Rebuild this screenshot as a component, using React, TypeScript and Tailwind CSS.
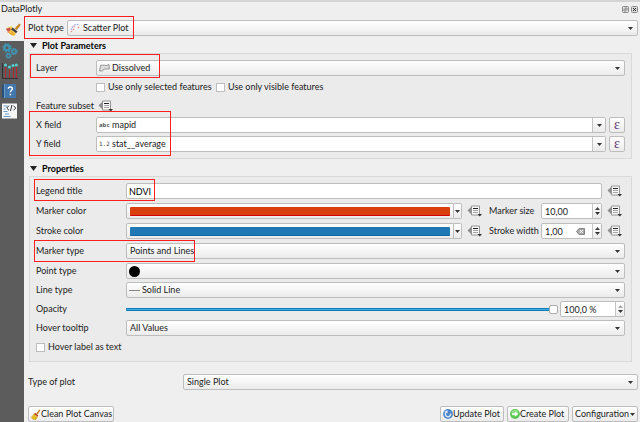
import React, { useState } from 'react';

interface ChildrenProps {
  children?: React.ReactNode;
}

/* ---------- Icons ---------- */

const DownArrow = () => (
  <svg viewBox="0 0 5 3" className="h-[3px] w-[5px] shrink-0" fill="#333">
    <path d="M0 0h5L2.5 3z" />
  </svg>
);

const UpArrow = ({ fill = '#444' }: { fill?: string }) => (
  <svg viewBox="0 0 5 3" className="h-[3px] w-[5px]" fill={fill}>
    <path d="M0 3h5L2.5 0z" />
  </svg>
);

const BrushIcon = () => (
  <svg viewBox="0 0 16 14" className="h-[14px] w-4">
    <path d="M1 5.500l5-2.500 2 2-1 3-4 1z" fill="#f6d84c" />
    <path d="M.8 6l4-1.500 1.500 3-3 1.500z" fill="#cf4f5b" />
    <path d="M2 9l4-2 1.500 2.500L5 11z" fill="#f29a55" />
    <path d="M7.500 4.500l5 4-1.500 1.800L6 6.500z" fill="#3d3d3d" />
    <path d="M6 6.500l5 4-2 2.500-3-1-2-3z" fill="#f2bd3a" />
    <path d="M6.500 9l2 2.500M5.500 10l1.500 2" stroke="#c98f1e" strokeWidth=".6" />
    <path d="M10 5.500L14.300.8l1 1.200-3.500 4.800z" fill="#d08a1c" stroke="#a8690e" strokeWidth=".5" />
  </svg>
);

const GearsIcon = () => (
  <svg viewBox="0 0 16 16" className="h-4 w-4" fill="none" stroke="#3f97b5">
    <circle cx="5" cy="4.800" r="2.500" strokeWidth="2" />
    <circle cx="5" cy="4.800" r="3.900" strokeWidth="1.600" strokeDasharray="1.700 1.363" />
    <circle cx="12.200" cy="8.500" r="1.900" strokeWidth="1.500" />
    <circle cx="12.200" cy="8.500" r="2.900" strokeWidth="1.300" strokeDasharray="1.300 .978" />
    <circle cx="6.500" cy="12.700" r="1.700" strokeWidth="1.400" />
    <circle cx="6.500" cy="12.700" r="2.600" strokeWidth="1.200" strokeDasharray="1.100 .942" />
  </svg>
);

const StemsIcon = () => (
  <svg viewBox="0 0 16 16" className="h-4 w-4">
    <path d="M.5 0v15.500H16" fill="none" stroke="#303030" />
    <path d="M3.500 4v11M7.500 6v9M11.500 4v11M14.500 3v12" stroke="#b5262e" strokeWidth="1" />
    <g fill="#4fd0cf">
      <circle cx="3.500" cy="2" r="1.500" />
      <circle cx="7.500" cy="4" r="1.500" />
      <circle cx="11" cy="2.500" r="1.500" />
      <circle cx="14.300" cy="2" r="1.500" />
    </g>
  </svg>
);

const HelpIcon = () => (
  <svg viewBox="0 0 14 14" className="h-[14px] w-[14px]">
    <path d="M0 1l2-1v14H0z" fill="#28507a" />
    <rect x="2" width="12" height="14" rx="1" fill="#4378ae" />
    <rect x="2" width="1" height="14" fill="#6d9ac7" />
    <path
      d="M6.300 4.800c0-2.500 4.100-2.500 4.100 0 0 1.500-2 1.600-2 3.400M8.400 9.800v1.400"
      fill="none"
      stroke="#fff"
      strokeWidth="1.400"
    />
  </svg>
);

const CodeIcon = () => (
  <svg viewBox="0 0 16 16" className="h-4 w-4">
    <path d="M1 .5h15v15H1z" fill="#f4f6f8" />
    <path d="M2.500 3h4M2.500 6h2M2.500 8.500h4M4 11h4M2.500 13.500h7" stroke="#6d9bc9" strokeWidth="1.200" />
    <path d="M8 2.700L5.700 5 8 7.300M12.500 2.700L14.800 5l-2.300 2.300M11 2L9.400 8" fill="none" stroke="#333" />
  </svg>
);

const ScatterIcon = () => (
  <svg viewBox="0 0 10 10" className="h-[10px] w-[10px]">
    <g fill="#e88a8a">
      <circle cx="1.500" cy="8.500" r=".8" />
      <circle cx="3.500" cy="6.500" r=".8" />
      <circle cx="4" cy="3.500" r=".8" />
      <circle cx="8.500" cy="4.500" r=".8" />
    </g>
    <g fill="#9a9fe0">
      <circle cx="1.500" cy="6" r=".8" />
      <circle cx="2.500" cy="4" r=".8" />
      <circle cx="5" cy="1.800" r=".8" />
      <circle cx="7.500" cy="1.500" r=".8" />
    </g>
  </svg>
);

const PolygonIcon = () => (
  <svg viewBox="0 0 11 8" className="h-2 w-[11px]">
    <path
      d="M1.500 1.200h4l1.500.5 3-1.200.4 4.500H7.500L5 5 3.500 7H.6z"
      fill="#dcdcdc"
      stroke="#909090"
      strokeWidth=".9"
      strokeLinejoin="round"
    />
  </svg>
);

const OverrideIcon = () => (
  <svg viewBox="0 0 15 12" className="h-3 w-[15px]">
    <path d="M4.500 1.500v8L.5 5.500z" fill="#8c8c8c" />
    <path d="M4.500 1h8v9h-8z" fill="#f8f8f8" stroke="#8a8a8a" strokeWidth=".9" />
    <path d="M6 3.500h5" stroke="#222" strokeWidth="1" />
    <path d="M6 5.500h5M6 7.500h5" stroke="#9a9a9a" strokeWidth=".9" />
    <path d="M10.500 9h4.500l-2.200 2.500z" fill="#333" />
  </svg>
);

const BroomIcon = () => (
  <svg viewBox="0 0 10 11" className="h-[11px] w-[10px] shrink-0">
    <path d="M8.500.5l1 .8-3 4.200-1.200-.9z" fill="#c9731c" />
    <path d="M4 3.800l3.300 2.600-.8 1.300L3 5z" fill="#b43a22" />
    <path d="M3 5l3.500 2.700-1.500 2.800C3 11 1 10 .3 8.500z" fill="#f2c62e" stroke="#b98a14" strokeWidth=".5" />
    <path d="M3.500 6.500L2 9M5 7.500L3.800 10" stroke="#b98a14" strokeWidth=".5" />
  </svg>
);

const RefreshIcon = () => (
  <svg viewBox="0 0 10 10" className="h-[10px] w-[10px] shrink-0">
    <circle cx="5" cy="5" r="4.900" fill="#4d86cb" />
    <path d="M3 3.200a2.700 2.700 0 1 0 4.600 1.300" fill="none" stroke="#e6effa" strokeWidth="1.200" />
    <path d="M1.500 2l3.300-.5-.5 3z" fill="#e6effa" />
  </svg>
);

const CreateIcon = () => (
  <svg viewBox="0 0 10 10" className="h-[10px] w-[10px] shrink-0">
    <circle cx="5" cy="5" r="4.900" fill="#58c653" />
    <circle cx="5" cy="3.800" r="3.400" fill="#8adf83" />
    <path d="M2 4.200h3V2.500L8.200 5 5 7.500V5.800H2z" fill="#fff" />
  </svg>
);

const ClearIcon = () => (
  <svg viewBox="0 0 9 7" className="h-[7px] w-[9px]">
    <path d="M3 .5h5.500v6H3L.5 3.500z" fill="#a8a8a8" stroke="#858585" />
    <path d="M3.800 2l3 3M6.800 2l-3 3" stroke="#fff" strokeWidth=".9" />
  </svg>
);

/* ---------- Controls ---------- */

// thin red frame used to point out the fields of the tutorial step
const Highlight = ({ className }: { className: string }) => (
  <span className={`pointer-events-none absolute z-10 border border-[#ff1e1e] ${className}`} />
);

interface ComboProps {
  id: string;
  value: string;
  icon?: React.ReactNode;
  editable?: boolean;
}

const Combo: React.FC<ComboProps> = ({ id, value, icon, editable }) => (
  <div className="relative min-w-0 flex-1">
    <select
      id={id}
      className={`block h-4 w-full appearance-none rounded-[2px] border border-[#bdbdbd] leading-[14px] ${
        icon ? 'pl-[15px]' : 'pl-[3px]'
      } ${editable ? 'bg-white' : 'bg-linear-to-b from-white to-[#ebebeb]'}`}
    >
      <option>{value}</option>
    </select>
    {icon && <span className="pointer-events-none absolute inset-y-0 left-[3px] flex items-center">{icon}</span>}
    <span
      className={`pointer-events-none absolute inset-y-px right-px flex w-[13px] items-center justify-center ${
        editable ? 'border-l border-[#c4c4c4] bg-linear-to-b from-white to-[#ebebeb]' : ''
      }`}
    >
      <DownArrow />
    </span>
  </div>
);

interface SpinProps {
  id: string;
  value: string;
  className: string;
  clearable?: boolean;
  atMax?: boolean;
}

const Spin: React.FC<SpinProps> = ({ id, value, className, clearable, atMax }) => (
  <div className={`flex h-4 items-center rounded-[2px] border border-[#bdbdbd] bg-white ${className}`}>
    <input
      id={id}
      aria-label={id}
      defaultValue={value}
      className="h-full w-full min-w-0 flex-1 pl-[3px] outline-none"
    />
    {clearable && (
      <button aria-label="Clear" className="mr-[7px]">
        <ClearIcon />
      </button>
    )}
    <div className="flex h-full w-[9px] flex-col items-center justify-evenly border-l border-[#c4c4c4] bg-linear-to-b from-white to-[#ebebeb]">
      <button aria-label="Increase">
        <UpArrow fill={atMax ? '#aaa' : '#444'} />
      </button>
      <button aria-label="Decrease">
        <DownArrow />
      </button>
    </div>
  </div>
);

const OverrideButton = () => (
  <button aria-label="Data defined override" className="flex w-4">
    <OverrideIcon />
  </button>
);

const ExpressionButton = () => (
  <button
    aria-label="Expression"
    className="ml-[3px] flex h-4 w-4 items-center justify-center rounded-[2px] border border-[#bdbdbd] bg-linear-to-b from-white to-[#ebebeb] font-['Liberation_Serif',serif] text-[14px] leading-none text-[#5f3673]"
  >
    ε
  </button>
);

const ColorButton = ({ id, swatch }: { id: string; swatch: string }) => (
  <div className="flex h-4 min-w-0 flex-1">
    <button
      id={id}
      className="flex flex-1 items-center rounded-l-[2px] border border-[#bdbdbd] bg-linear-to-b from-white to-[#ebebeb] px-[3px]"
    >
      <span className={`h-[9px] w-full rounded-[1px] border-b ${swatch}`} />
    </button>
    <button
      aria-label="Color menu"
      className="flex w-2 items-center justify-center rounded-r-[2px] border border-l-0 border-[#bdbdbd] bg-linear-to-b from-white to-[#ebebeb]"
    >
      <DownArrow />
    </button>
  </div>
);

interface CheckProps {
  label: string;
  className?: string;
}

const Check: React.FC<CheckProps> = ({ label, className = '' }) => (
  <label className={`flex h-4 items-center gap-[3px] whitespace-nowrap ${className}`}>
    <input
      type="checkbox"
      className="h-[9px] w-[9px] appearance-none border border-[#bdbdbd] bg-white checked:bg-[#3daee9]"
    />
    {label}
  </label>
);

interface RowProps extends ChildrenProps {
  label: string;
  htmlFor: string;
  wide?: boolean;
}

const Row: React.FC<RowProps> = ({ label, htmlFor, wide, children }) => (
  <div className="relative flex h-4 items-center">
    <label htmlFor={htmlFor} className={`shrink-0 ${wide ? 'w-[90px]' : 'w-[60px]'}`}>
      {label}
    </label>
    {children}
  </div>
);

const Group: React.FC<{ title: string } & ChildrenProps> = ({ title, children }) => (
  <section className="mr-[6px] ml-px">
    <h2 className="flex h-[17px] items-center gap-[5px] pt-[2px] pl-px font-bold text-black">
      <svg viewBox="0 0 7 5" className="h-[5px] w-[7px]" fill="#222">
        <path d="M0 0h7L3.500 5z" />
      </svg>
      {title}
    </h2>
    <div className="border border-[#d9d9d9] bg-[#ebebeb] p-[6px]">{children}</div>
  </section>
);

const PushButton: React.FC<{ icon?: React.ReactNode; className?: string } & ChildrenProps> = ({
  icon,
  className = '',
  children,
}) => (
  <button
    className={`flex h-4 items-center rounded-[2px] border border-[#bdbdbd] bg-linear-to-b from-white to-[#ebebeb] pl-[2px] whitespace-nowrap ${className}`}
  >
    {icon}
    {children}
  </button>
);

/* ---------- Panel ---------- */

export default function App() {
  const [opacity, setOpacity] = useState(100);

  return (
    <div className="flex min-h-screen flex-col border-t-2 border-[#d4d4d4] bg-[#efefef] font-[Lato,sans-serif] text-[9px] leading-[12px] text-[#222]">
      <header className="flex h-[17px] items-center justify-between pr-[2px] pb-[3px] pl-px">
        <h1>DataPlotly</h1>
        <div className="flex gap-[2px]">
          <button aria-label="Float">
            <svg viewBox="0 0 7 7" className="h-[7px] w-[7px]" fill="none">
              <rect x=".5" y=".5" width="6" height="6" rx="1" stroke="#888" fill="#ddd" />
              <path d="M3 2h2v2M2 3h2v2H2z" stroke="#777" strokeWidth=".7" />
            </svg>
          </button>
          <button aria-label="Close">
            <svg viewBox="0 0 7 7" className="h-[7px] w-[7px]" fill="none">
              <rect x=".5" y=".5" width="6" height="6" rx="1" stroke="#888" fill="#ddd" />
              <path d="M2 2l3 3M5 2L2 5" stroke="#222" />
            </svg>
          </button>
        </div>
      </header>

      <div className="flex flex-1">
        <nav className="flex w-6 shrink-0 flex-col bg-[#5c5c5c]">
          <button aria-label="Plot" className="flex h-[22px] items-center justify-center bg-[#efefef] pl-px">
            <BrushIcon />
          </button>
          <button aria-label="Settings" className="flex h-5 items-center pl-[2px]">
            <GearsIcon />
          </button>
          <button aria-label="Canvas" className="flex h-5 items-center pl-[2px]">
            <StemsIcon />
          </button>
          <button aria-label="Help" className="flex h-5 items-center pl-[2px]">
            <HelpIcon />
          </button>
          <button aria-label="Code" className="flex h-5 items-center pl-px">
            <CodeIcon />
          </button>
        </nav>

        <main className="flex min-w-0 flex-1 flex-col pt-px pr-[2px] pl-1">
          <div className="relative flex h-4 items-center">
            <Highlight className="-top-1 -left-1 h-[23px] w-[110px]" />
            <label htmlFor="plot-type" className="w-[39px] shrink-0">
              Plot type
            </label>
            <Combo id="plot-type" value="Scatter Plot" icon={<ScatterIcon />} />
          </div>

          <Group title="Plot Parameters">
            <div className="flex flex-col gap-[3px]">
              <Row label="Layer" htmlFor="layer">
                <Highlight className="-top-[6px] -left-[6px] h-6 w-[130px]" />
                <Combo id="layer" value="Dissolved" icon={<PolygonIcon />} />
              </Row>
              <div className="flex pl-[60px]">
                <Check label="Use only selected features" className="w-[120px]" />
                <Check label="Use only visible features" />
              </div>
              <div className="flex h-4 items-center">
                <span className="w-[62px] whitespace-nowrap">Feature subset</span>
                <OverrideButton />
              </div>
              <div className="relative flex flex-col gap-[3px]">
                <Highlight className="-top-[6px] -left-[7px] h-[45px] w-[142px]" />
                <Row label="X field" htmlFor="x-field">
                  <Combo
                    id="x-field"
                    value="mapid"
                    editable
                    icon={<span className="font-['Noto_Sans',sans-serif] text-[6px] font-bold text-[#555]">abc</span>}
                  />
                  <ExpressionButton />
                </Row>
                <Row label="Y field" htmlFor="y-field">
                  <Combo
                    id="y-field"
                    value="stat__average"
                    editable
                    icon={<span className="font-['DejaVu_Sans_Mono',monospace] text-[6px] text-[#444]">1.2</span>}
                  />
                  <ExpressionButton />
                </Row>
              </div>
            </div>
          </Group>

          <Group title="Properties">
            <div className="flex flex-col gap-1">
              <Row label="Legend title" htmlFor="legend" wide>
                <Highlight className="-top-1 -left-[2px] h-[22px] w-[121px]" />
                <input
                  id="legend"
                  defaultValue="NDVI"
                  className="h-4 min-w-0 flex-1 rounded-[2px] border border-[#bdbdbd] bg-white pl-[2px] text-black"
                />
                <span className="mr-[2px] ml-[5px]">
                  <OverrideButton />
                </span>
              </Row>
              <Row label="Marker color" htmlFor="marker-color" wide>
                <ColorButton id="marker-color" swatch="border-[#d40000] bg-[#d93e0e]" />
                <span className="mr-[6px] ml-[5px]">
                  <OverrideButton />
                </span>
                <label htmlFor="marker-size" className="w-[52px]">
                  Marker size
                </label>
                <Spin id="marker-size" value="10,00" className="w-[61px]" />
                <span className="mr-[2px] ml-[5px]">
                  <OverrideButton />
                </span>
              </Row>
              <Row label="Stroke color" htmlFor="stroke-color" wide>
                <ColorButton id="stroke-color" swatch="border-[#0f65a5] bg-[#1f77b4]" />
                <span className="mr-[6px] ml-[5px]">
                  <OverrideButton />
                </span>
                <label htmlFor="stroke-width" className="w-[52px] whitespace-nowrap">
                  Stroke width
                </label>
                <Spin id="stroke-width" value="1,00" className="w-[61px]" clearable />
                <span className="mr-[2px] ml-[5px]">
                  <OverrideButton />
                </span>
              </Row>
              <Row label="Marker type" htmlFor="marker-type" wide>
                <Highlight className="-top-[3px] -left-[2px] h-[22px] w-[161px]" />
                <Combo id="marker-type" value="Points and Lines" />
              </Row>
            </div>
            <div className="mt-1 flex flex-col gap-[3px]">
              <Row label="Point type" htmlFor="point-type" wide>
                <Combo
                  id="point-type"
                  value=""
                  icon={<span className="h-[11px] w-[11px] rounded-full bg-black" />}
                />
              </Row>
              <Row label="Line type" htmlFor="line-type" wide>
                <Combo
                  id="line-type"
                  value="Solid Line"
                  icon={<span className="h-px w-[11px] bg-[#888]" />}
                />
              </Row>
              <Row label="Opacity" htmlFor="opacity" wide>
                <input
                  id="opacity"
                  type="range"
                  value={opacity}
                  onChange={(e) => setOpacity(Number(e.target.value))}
                  className="mr-[2px] h-4 min-w-0 flex-1 appearance-none bg-transparent [&::-webkit-slider-runnable-track]:h-[3px] [&::-webkit-slider-runnable-track]:border-y [&::-webkit-slider-runnable-track]:border-[#0f7bb5] [&::-webkit-slider-runnable-track]:bg-[#3daee9] [&::-webkit-slider-thumb]:-mt-1 [&::-webkit-slider-thumb]:h-[9px] [&::-webkit-slider-thumb]:w-[9px] [&::-webkit-slider-thumb]:appearance-none [&::-webkit-slider-thumb]:rounded-[2px] [&::-webkit-slider-thumb]:border [&::-webkit-slider-thumb]:border-[#aaa] [&::-webkit-slider-thumb]:bg-white"
                />
                <Spin id="opacity-value" value="100,0 %" className="w-[65px]" atMax />
              </Row>
              <Row label="Hover tooltip" htmlFor="hover" wide>
                <Combo id="hover" value="All Values" />
              </Row>
              <Check label="Hover label as text" />
            </div>
          </Group>

          <div className="mt-3 flex h-4 items-center">
            <label htmlFor="plot-kind" className="w-[155px] shrink-0">
              Type of plot
            </label>
            <Combo id="plot-kind" value="Single Plot" />
          </div>

          <footer className="mt-4 flex gap-[3px]">
            <PushButton icon={<BroomIcon />} className="mr-auto w-[86px]">
              Clean Plot Canvas
            </PushButton>
            <PushButton icon={<RefreshIcon />} className="w-16">
              Update Plot
            </PushButton>
            <PushButton icon={<CreateIcon />} className="w-[62px]">
              Create Plot
            </PushButton>
            <PushButton className="w-[66px] justify-between pr-[2px]">
              Configuration
              <DownArrow />
            </PushButton>
          </footer>
        </main>
      </div>
    </div>
  );
}
